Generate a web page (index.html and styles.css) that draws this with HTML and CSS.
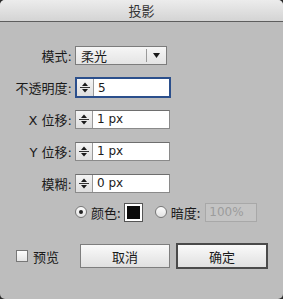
FILE: index.html
```html
<!DOCTYPE html>
<html lang="zh-CN">
<head>
  <meta charset="UTF-8" />
  <title>投影</title>
  <link rel="stylesheet" href="styles.css">
</head>
<body>
  <div class="window">
    <div class="titlebar">投影</div>

    <div class="form">
      <div class="row row-mode">
        <label class="lbl">模式:</label>
        <div class="select">
          <span class="select-text">柔光</span>
          <span class="select-btn"><svg width="7" height="5" viewBox="0 0 7 5"><path d="M0 0H7L3.5 5Z" fill="#1a1a1a"/></svg></span>
        </div>
      </div>

      <div class="row row-opacity">
        <label class="lbl">不透明度:</label>
        <div class="field focus">
          <span class="spin"><svg width="16" height="15" viewBox="0 0 16 15"><path d="M5 6H11L8 2.5Z" fill="#1a1a1a"/><path d="M3 7.5H13" stroke="#333" stroke-width="1"/><path d="M5 9H11L8 12.5Z" fill="#1a1a1a"/></svg></span>
          <span class="val">5</span>
        </div>
      </div>

      <div class="row">
        <label class="lbl">X 位移:</label>
        <div class="field">
          <span class="spin"><svg width="16" height="15" viewBox="0 0 16 15"><path d="M5 6H11L8 2.5Z" fill="#1a1a1a"/><path d="M3 7.5H13" stroke="#333" stroke-width="1"/><path d="M5 9H11L8 12.5Z" fill="#1a1a1a"/></svg></span>
          <span class="val">1 px</span>
        </div>
      </div>

      <div class="row">
        <label class="lbl">Y 位移:</label>
        <div class="field">
          <span class="spin"><svg width="16" height="15" viewBox="0 0 16 15"><path d="M5 6H11L8 2.5Z" fill="#1a1a1a"/><path d="M3 7.5H13" stroke="#333" stroke-width="1"/><path d="M5 9H11L8 12.5Z" fill="#1a1a1a"/></svg></span>
          <span class="val">1 px</span>
        </div>
      </div>

      <div class="row">
        <label class="lbl">模糊:</label>
        <div class="field">
          <span class="spin"><svg width="16" height="15" viewBox="0 0 16 15"><path d="M5 6H11L8 2.5Z" fill="#1a1a1a"/><path d="M3 7.5H13" stroke="#333" stroke-width="1"/><path d="M5 9H11L8 12.5Z" fill="#1a1a1a"/></svg></span>
          <span class="val">0 px</span>
        </div>
      </div>

      <div class="row row-radio">
        <span class="lbl"></span>
        <div class="radios">
          <span class="radio checked"></span>
          <span class="radio-lbl">颜色:</span>
          <span class="swatch"></span>
          <span class="radio radio-2"></span>
          <span class="radio-lbl">暗度:</span>
          <span class="field disabled"><span class="val">100%</span></span>
        </div>
      </div>
    </div>

    <div class="footer">
      <label class="preview"><span class="check"></span>预览</label>
      <button class="btn btn-cancel">取消</button>
      <button class="btn btn-ok">确定</button>
    </div>
  </div>
</body>
</html>
```

FILE: styles.css
```css
html, body {
  margin: 0;
  padding: 0;
  background-color: #2a2a2a;
}

body {
  font-family: 'DejaVu Sans', 'Noto Sans CJK SC', sans-serif;
  font-size: 13px;
  color: #1a1a1a;
}

.window {
  width: 283px;
  height: 299px;
  background-color: #bdbdbd;
  border-radius: 5px;
  overflow: hidden;
}

.titlebar {
  height: 21px;
  line-height: 21px;
  text-align: center;
  font-family: 'Noto Sans CJK SC', sans-serif;
  font-size: 13px;
  color: #333;
  background: linear-gradient(#ececec, #d4d4d4);
  border-bottom: 1px solid #5e5e5e;
}

.form {
  padding-top: 23px;
}

.row {
  display: grid;
  grid-template-columns: 72px auto;
  column-gap: 3px;
  align-items: center;
  height: 20px;
  margin-bottom: 12px;
}

.row-opacity {
  height: 21px;
  margin-bottom: 11px;
}

.row-radio {
  margin-top: -3px;
}

.lbl {
  text-align: right;
  font-family: 'DejaVu Sans', 'Noto Sans CJK SC', sans-serif;
  font-size: 13px;
  white-space: nowrap;
}

.select {
  width: 90px;
  height: 17px;
  display: flex;
  align-items: center;
  background: linear-gradient(#f6f6f6, #e4e4e4);
  border: 1px solid #7c7c7c;
}

.select-text {
  flex: 1;
  padding-left: 5px;
  font-family: 'Noto Sans CJK SC', sans-serif;
}

.select-btn {
  width: 19px;
  height: 13px;
  display: flex;
  align-items: center;
  justify-content: center;
  border-left: 1px solid #9a9a9a;
}

.field {
  width: 93px;
  height: 17px;
  display: flex;
  align-items: center;
  background-color: #fff;
  border: 1px solid #8a8a8a;
  border-top-color: #6e6e6e;
}

.field.focus {
  width: 92px;
  height: 17px;
  border: 2px solid #2b4f8c;
}

.spin {
  width: 16px;
  height: 100%;
  display: flex;
  align-items: center;
  justify-content: center;
  background: linear-gradient(#f4f4f4, #dedede);
  border-right: 1px solid #9a9a9a;
}

.val {
  padding-left: 4px;
  font-family: 'DejaVu Sans', sans-serif;
  font-size: 12px;
}

.radios {
  display: flex;
  align-items: center;
  height: 20px;
}

.radio {
  width: 10px;
  height: 10px;
  border: 1px solid #777;
  border-radius: 50%;
  background: linear-gradient(#fdfdfd, #e2e2e2);
  position: relative;
}

.radio.checked::after {
  content: "";
  position: absolute;
  left: 3px;
  top: 3px;
  width: 4px;
  height: 4px;
  border-radius: 50%;
  background-color: #222;
}

.radio-lbl {
  margin-left: 4px;
  font-family: 'Noto Sans CJK SC', sans-serif;
}

.swatch {
  width: 13px;
  height: 13px;
  margin-left: 4px;
  background-color: #0a0a0a;
  border: 2px solid #fff;
  outline: 1px solid #555;
}

.radio-2 {
  margin-left: 13px;
}

.field.disabled {
  width: 50px;
  margin-left: 5px;
  background-color: #c4c4c4;
  border-color: #a8a8a8;
}

.field.disabled .val {
  color: #9c9c9c;
  padding-left: 3px;
}

.footer {
  display: flex;
  align-items: center;
  margin-top: 21px;
  padding-left: 16px;
  height: 26px;
}

.preview {
  display: flex;
  align-items: center;
  font-family: 'Noto Sans CJK SC', sans-serif;
  width: 64px;
}

.check {
  width: 10px;
  height: 10px;
  margin-right: 5px;
  border: 1px solid #777;
  background: linear-gradient(#fdfdfd, #e4e4e4);
}

.btn {
  height: 24px;
  padding: 0;
  font-family: 'Noto Sans CJK SC', sans-serif;
  font-size: 13px;
  color: #1a1a1a;
  background: linear-gradient(#fafafa, #e0e0e0);
  border: 1px solid #7e7e7e;
}

.btn-cancel {
  width: 90px;
}

.btn-ok {
  width: 92px;
  height: 26px;
  margin-left: 6px;
  border: 2px solid #4a4a4a;
}
```
